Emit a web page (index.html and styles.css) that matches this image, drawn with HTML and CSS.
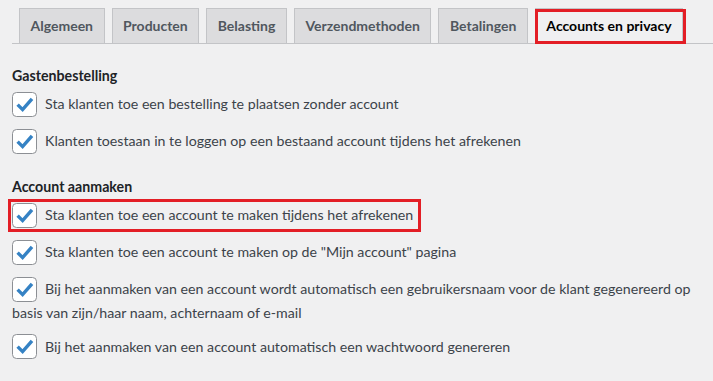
FILE: index.html
```html
<!DOCTYPE html>
<html lang="nl">
<head>
<meta charset="utf-8">
<title>Accounts en privacy</title>
<link rel="stylesheet" href="styles.css">
</head>
<body>
<nav class="tabs">
  <a class="tab">Algemeen</a>
  <a class="tab">Producten</a>
  <a class="tab">Belasting</a>
  <a class="tab">Verzendmethoden</a>
  <a class="tab">Betalingen</a>
  <a class="tab tab-active">Accounts en privacy</a>
</nav>

<section class="group">
  <h2 class="group-title">Gastenbestelling</h2>
  <label class="opt"><svg class="cb" viewBox="0 0 25 25"><rect x="0.5" y="0.5" width="24" height="24" rx="4"/><path d="M5.6 12.6 L10.6 17.6 L20 6.8"/></svg>Sta klanten toe een bestelling te plaatsen zonder account</label>
  <label class="opt"><svg class="cb" viewBox="0 0 25 25"><rect x="0.5" y="0.5" width="24" height="24" rx="4"/><path d="M5.6 12.6 L10.6 17.6 L20 6.8"/></svg>Klanten toestaan in te loggen op een bestaand account tijdens het afrekenen</label>
</section>

<section class="group">
  <h2 class="group-title">Account aanmaken</h2>
  <label class="opt"><span class="mark"><svg class="cb" viewBox="0 0 25 25"><rect x="0.5" y="0.5" width="24" height="24" rx="4"/><path d="M5.6 12.6 L10.6 17.6 L20 6.8"/></svg>Sta klanten toe een account te maken tijdens het afrekenen</span></label>
  <label class="opt"><svg class="cb" viewBox="0 0 25 25"><rect x="0.5" y="0.5" width="24" height="24" rx="4"/><path d="M5.6 12.6 L10.6 17.6 L20 6.8"/></svg>Sta klanten toe een account te maken op de "Mijn account" pagina</label>
  <label class="opt"><svg class="cb" viewBox="0 0 25 25"><rect x="0.5" y="0.5" width="24" height="24" rx="4"/><path d="M5.6 12.6 L10.6 17.6 L20 6.8"/></svg>Bij het aanmaken van een account wordt automatisch een gebruikersnaam voor de klant gegenereerd op basis van zijn/haar naam, achternaam of e-mail</label>
  <label class="opt"><svg class="cb" viewBox="0 0 25 25"><rect x="0.5" y="0.5" width="24" height="24" rx="4"/><path d="M5.6 12.6 L10.6 17.6 L20 6.8"/></svg>Bij het aanmaken van een account automatisch een wachtwoord genereren</label>
</section>
</body>
</html>
```

FILE: styles.css
```css
html, body {
  margin: 0;
  padding: 0;
  background: #f0f0f1;
}

body {
  font-family: "Lato", "Liberation Sans", sans-serif;
  font-size: 14.2px;
  color: #3c434a;
  padding: 8px 0 0 12px;
}

.tabs {
  display: flex;
  gap: 7px;
  padding-left: 7px;
  border-bottom: 1px solid #c3c4c7;
  height: 35px;
  align-items: flex-end;
}

.tab {
  box-sizing: border-box;
  height: 35px;
  line-height: 34px;
  padding: 0 10.5px;
  background: #dcdcde;
  border: 1px solid #c3c4c7;
  border-bottom: none;
  color: #50575e;
  font-weight: 700;
  font-size: 14px;
  white-space: nowrap;
}

.tab-active {
  position: relative;
  background: #f0f0f1;
  color: #000;
  height: 36px;
  margin-bottom: -1px;
}

.tab-active::after {
  content: "";
  position: absolute;
  left: -1px;
  right: -4px;
  top: 0;
  bottom: 0;
  border: 3px solid #e31e26;
}

.group {
  padding-top: 21px;
}

.group + .group {
  padding-top: 9px;
}

.group-title {
  margin: 0 0 6px;
  font-size: 14.2px;
  line-height: 22px;
  font-weight: 700;
  color: #1d2327;
}

.opt {
  display: block;
  line-height: 21px;
  margin-bottom: 13px;
  padding-right: 12px;
}

.cb {
  width: 25px;
  height: 25px;
  vertical-align: middle;
  margin: -2px 8px 0 0;
}

.cb rect {
  fill: #fff;
  stroke: #8c8f94;
  stroke-width: 1;
}

.cb path {
  fill: none;
  stroke: #3582c4;
  stroke-width: 3.4;
  stroke-linecap: butt;
  stroke-linejoin: miter;
}

.mark {
  position: relative;
  display: inline-block;
}

.mark::after {
  content: "";
  position: absolute;
  left: -4px;
  right: -8px;
  top: -5px;
  bottom: -4px;
  border: 3px solid #e31e26;
}
```
